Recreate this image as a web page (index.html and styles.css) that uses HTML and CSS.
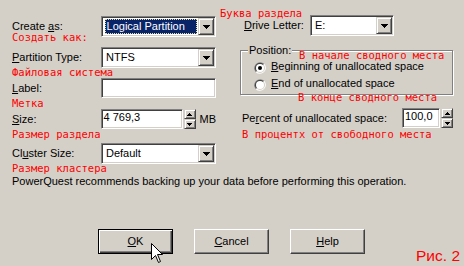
FILE: index.html
```html
<!DOCTYPE html>
<html lang="ru">
<head>
  <meta charset="UTF-8" />
  <title>Create Partition</title>
  <link rel="stylesheet" href="styles.css">
</head>
<body>
  <div class="dialog">
    <div class="columns">

      <!-- left column: type, fs, label, size, cluster -->
      <div class="col-left">
        <div class="row">
          <div class="cap">
            <div class="lbl">Create <u>a</u>s:</div>
            <div class="note tight">Создать как:</div>
          </div>
          <div class="combo sunken">
            <div class="value"><span class="text selected">Logical Partition</span></div>
            <div class="drop raised">
              <svg width="7" height="4" viewBox="0 0 7 4"><path d="M0 0h7v1h-1v1h-1v1h-1v1h-1v-1h-1v-1h-1v-1h-1z" fill="#000"/></svg>
            </div>
          </div>
        </div>

        <div class="row">
          <div class="cap">
            <div class="lbl"><u>P</u>artition Type:</div>
            <div class="note">Файловая система</div>
          </div>
          <div class="combo sunken">
            <div class="value"><span class="text">NTFS</span></div>
            <div class="drop raised">
              <svg width="7" height="4" viewBox="0 0 7 4"><path d="M0 0h7v1h-1v1h-1v1h-1v1h-1v-1h-1v-1h-1v-1h-1z" fill="#000"/></svg>
            </div>
          </div>
        </div>

        <div class="row">
          <div class="cap">
            <div class="lbl"><u>L</u>abel:</div>
            <div class="note">Метка</div>
          </div>
          <div class="field sunken field-label"></div>
        </div>

        <div class="row row-size">
          <div class="cap">
            <div class="lbl"><u>S</u>ize:</div>
            <div class="note">Размер раздела</div>
          </div>
          <div class="field sunken field-size">4 769,3</div>
          <div class="spin">
            <div class="raised spin-btn"><svg width="5" height="3" viewBox="0 0 5 3"><path d="M2 0h1v1h1v1h1v1h-5v-1h1v-1h1z" fill="#000"/></svg></div>
            <div class="raised spin-btn"><svg width="5" height="3" viewBox="0 0 5 3"><path d="M0 0h5v1h-1v1h-1v1h-1v-1h-1v-1h-1z" fill="#000"/></svg></div>
          </div>
          <div class="unit">MB</div>
        </div>

        <div class="row row-cluster">
          <div class="cap">
            <div class="lbl">Cl<u>u</u>ster Size:</div>
            <div class="note">Размер кластера</div>
          </div>
          <div class="combo sunken">
            <div class="value"><span class="text">Default</span></div>
            <div class="drop raised">
              <svg width="7" height="4" viewBox="0 0 7 4"><path d="M0 0h7v1h-1v1h-1v1h-1v1h-1v-1h-1v-1h-1v-1h-1z" fill="#000"/></svg>
            </div>
          </div>
        </div>
      </div>

      <!-- right column: drive letter, position, percent -->
      <div class="col-right">
        <div class="row">
          <div class="cap cap-drive">
            <div class="note">Буква раздела</div>
            <div class="lbl"><u>D</u>rive Letter:</div>
          </div>
          <div class="combo sunken combo-drive">
            <div class="value"><span class="text">E:</span></div>
            <div class="drop raised">
              <svg width="7" height="4" viewBox="0 0 7 4"><path d="M0 0h7v1h-1v1h-1v1h-1v1h-1v-1h-1v-1h-1v-1h-1z" fill="#000"/></svg>
            </div>
          </div>
        </div>

        <fieldset class="group">
          <legend>Position:</legend>
          <div class="note group-note">В начале сводного места</div>
          <div class="radio">
            <svg width="12" height="12" viewBox="0 0 12 12">
              <path d="M1.76 10.24A6 6 0 0 1 10.24 1.76Z" fill="#808080"/>
              <path d="M1.76 10.24A6 6 0 0 0 10.24 1.76Z" fill="#fff"/>
              <path d="M2.46 9.54A5 5 0 0 1 9.54 2.46Z" fill="#404040"/>
              <path d="M2.46 9.54A5 5 0 0 0 9.54 2.46Z" fill="#d4d0c8"/>
              <circle cx="6" cy="6" r="4" fill="#fff"/>
              <circle cx="6" cy="6" r="2" fill="#000"/>
            </svg>
            <span><u>B</u>eginning of unallocated space</span>
          </div>
          <div class="radio radio-second">
            <svg width="12" height="12" viewBox="0 0 12 12">
              <path d="M1.76 10.24A6 6 0 0 1 10.24 1.76Z" fill="#808080"/>
              <path d="M1.76 10.24A6 6 0 0 0 10.24 1.76Z" fill="#fff"/>
              <path d="M2.46 9.54A5 5 0 0 1 9.54 2.46Z" fill="#404040"/>
              <path d="M2.46 9.54A5 5 0 0 0 9.54 2.46Z" fill="#d4d0c8"/>
              <circle cx="6" cy="6" r="4" fill="#fff"/>
            </svg>
            <span><u>E</u>nd of unallocated space</span>
          </div>
        </fieldset>
        <div class="note end-note">В конце сводного места</div>

        <div class="row row-percent">
          <div class="cap cap-percent">
            <div class="lbl">Pe<u>r</u>cent of unallocated space:</div>
            <div class="note">В процентх от свободного места</div>
          </div>
          <div class="field sunken field-percent">100,0</div>
          <div class="spin">
            <div class="raised spin-btn"><svg width="5" height="3" viewBox="0 0 5 3"><path d="M2 0h1v1h1v1h1v1h-5v-1h1v-1h1z" fill="#000"/></svg></div>
            <div class="raised spin-btn"><svg width="5" height="3" viewBox="0 0 5 3"><path d="M0 0h5v1h-1v1h-1v1h-1v-1h-1v-1h-1z" fill="#000"/></svg></div>
          </div>
        </div>
      </div>
    </div>

    <p class="warning">PowerQuest recommends backing up your data before performing this operation.</p>

    <div class="buttons">
      <div class="btn default"><u>O</u>K
        <svg class="cursor" width="13" height="21" viewBox="0 0 13 21"><path d="M0.5 0.5V16.5L4.5 12.5L7.5 19.5L9.5 18.5L6.5 11.5H11.5Z" fill="#fff" stroke="#000"/></svg>
      </div>
      <div class="btn"><u>C</u>ancel</div>
      <div class="btn"><u>H</u>elp</div>
      <span class="fig">Рис. 2</span>
    </div>
  </div>
</body>
</html>
```

FILE: styles.css
```css
* { box-sizing: border-box; }
body {
  margin: 0;
  width: 464px;
  height: 266px;
  overflow: hidden;
  background: #d4d0c8;
  color: #000;
  font: 11px/13px "Liberation Sans", Arial, sans-serif;
}
.dialog {
  padding: 0 4px 0 12px;
}
.columns {
  display: flex;
  align-items: flex-start;
}
.row {
  display: flex;
  align-items: flex-start;
}
/* Левая колонка */
.col-left {
  width: 204px;
  padding-top: 16px;
}
.col-left .row { height: 31px; }
.col-left .row-size { height: 34px; }
.col-left .row-cluster { height: 32px; }
.cap {
  width: 89px;
  padding-top: 4px;
  white-space: nowrap;
}
.note {
  color: #f00;
  font: 10.5px/11px "DejaVu Sans Mono", monospace;
  margin-top: 3px;
  white-space: nowrap;
}
.note.tight { margin-top: -1px; }

/* 3D рамки */
.sunken {
  background: #fff;
  border: 1px solid;
  border-color: #808080 #fff #fff #808080;
  box-shadow: inset 1px 1px #404040, inset -1px -1px #d4d0c8;
}
.raised {
  background: #d4d0c8;
  border: 1px solid;
  border-color: #d4d0c8 #404040 #404040 #d4d0c8;
  box-shadow: inset 1px 1px #fff, inset -1px -1px #808080;
}
.combo {
  display: flex;
  width: 116px;
  height: 21px;
  padding: 1px;
}
.value {
  flex: 1;
  padding: 1px 1px 1px 2px;
}
.text {
  display: block;
  height: 15px;
  line-height: 15px;
  padding: 0 1px;
}
.text.selected {
  padding: 0 2px;
  background: #0a246a;
  color: #fff;
  outline: 1px dotted #e8e0a0;
  outline-offset: -1px;
}
.drop {
  width: 16px;
  height: 17px;
  display: flex;
  align-items: center;
  justify-content: center;
}
.drop svg { display: block; }
.field {
  height: 20px;
  padding: 1px 2px 0;
  line-height: 13px;
}
.field-label { width: 116px; }
.field-size { width: 83px; }
.field-percent { width: 38px; }
.spin {
  margin-left: 1px;
  width: 12px;
  height: 20px;
}
.spin-btn {
  height: 10px;
  display: flex;
  align-items: center;
  justify-content: center;
}
.spin-btn svg { display: block; }
.unit {
  margin-left: 4px;
  padding-top: 4px;
}

/* Правая колонка */
.col-right {
  margin-left: 4px;
  padding-top: 8px;
}
.cap-drive {
  width: 90px;
  padding-top: 0;
}
.cap-drive .note { margin-top: 0; }
.cap-drive .lbl { margin-left: 24px; }
.combo-drive {
  width: 84px;
  margin-top: 7px;
}
.group {
  margin: 8px 0 0 20px;
  width: 213px;
  padding: 0 0 4px 0;
  border: 1px solid #808080;
  box-shadow: inset 1px 1px #fff, 1px 1px #fff;
  min-width: 0;
}
.group legend {
  margin-left: 7px;
  padding: 0 1px;
  line-height: 13px;
  background: #d4d0c8;
}
.group-note {
  margin: -6px 0 0 58px;
  line-height: 9px;
}
.radio {
  display: flex;
  align-items: flex-start;
  margin: 0 0 0 13px;
  height: 13px;
}
.radio svg {
  display: block;
  margin: 2px 5px 0 0;
}
.radio-second { margin-top: 4px; }
.end-note {
  margin: -3px 0 0 78px;
}
.row-percent { margin-top: 5px; }
.cap-percent {
  width: 182px;
  padding-left: 22px;
}
.cap-percent .note { margin-top: 4px; }

/* Низ */
.warning {
  margin: 0;
}
.buttons {
  display: flex;
  align-items: flex-start;
  margin-top: 41px;
  padding-left: 86px;
}
.btn {
  position: relative;
  width: 75px;
  height: 25px;
  margin-right: 21px;
  text-align: center;
  line-height: 23px;
  border: 1px solid;
  border-color: #fff #404040 #404040 #fff;
  box-shadow: inset -1px -1px #808080;
}
.btn.default {
  border-color: #000;
  box-shadow: inset 1px 1px #fff, inset -1px -1px #404040, inset -2px -2px #808080;
}
.cursor {
  position: absolute;
  left: 52px;
  top: 13px;
}
.fig {
  margin: 19px 0 0 auto;
  color: #f00;
  font: 15.5px/16px "Liberation Sans", Arial, sans-serif;
}
```
